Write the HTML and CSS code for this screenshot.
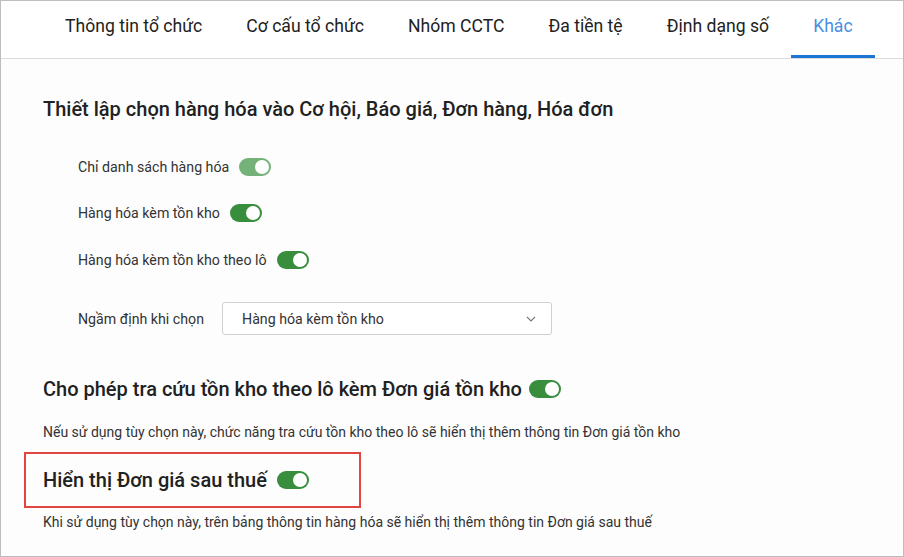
FILE: index.html
```html
<!DOCTYPE html>
<html lang="vi">
<head>
    <meta charset="UTF-8">
    <meta name="viewport" content="width=device-width, initial-scale=1.0">
    <title>Thiết lập khác</title>
    <link rel="stylesheet" href="styles.css">
</head>
<body>
    <div class="frame">
        <!-- Thanh tab -->
        <div class="tabs">
            <div class="tab">Thông tin tổ chức</div>
            <div class="tab">Cơ cấu tổ chức</div>
            <div class="tab">Nhóm CCTC</div>
            <div class="tab">Đa tiền tệ</div>
            <div class="tab">Định dạng số</div>
            <div class="tab active">Khác</div>
        </div>

        <div class="content">
            <h2 class="section-title first">Thiết lập chọn hàng hóa vào Cơ hội, Báo giá, Đơn hàng, Hóa đơn</h2>

            <div class="options">
                <div class="option">
                    <span>Chỉ danh sách hàng hóa</span>
                    <span class="switch disabled"><span class="knob"></span></span>
                </div>
                <div class="option">
                    <span>Hàng hóa kèm tồn kho</span>
                    <span class="switch"><span class="knob"></span></span>
                </div>
                <div class="option">
                    <span>Hàng hóa kèm tồn kho theo lô</span>
                    <span class="switch"><span class="knob"></span></span>
                </div>
                <div class="option default-row">
                    <span class="default-label">Ngầm định khi chọn</span>
                    <div class="select">
                        <span>Hàng hóa kèm tồn kho</span>
                        <svg class="chevron" width="10" height="6" viewBox="0 0 10 6">
                            <path d="M1 1 L5 5 L9 1" fill="none" stroke="#777" stroke-width="1.1"/>
                        </svg>
                    </div>
                </div>
            </div>

            <h2 class="section-title lookup">
                Cho phép tra cứu tồn kho theo lô kèm Đơn giá tồn kho
                <span class="switch"><span class="knob"></span></span>
            </h2>
            <p class="note">Nếu sử dụng tùy chọn này, chức năng tra cứu tồn kho theo lô sẽ hiển thị thêm thông tin Đơn giá tồn kho</p>

            <div class="highlight">
                <h2 class="section-title">
                    Hiển thị Đơn giá sau thuế
                    <span class="switch"><span class="knob"></span></span>
                </h2>
            </div>
            <p class="note last">Khi sử dụng tùy chọn này, trên bảng thông tin hàng hóa sẽ hiển thị thêm thông tin Đơn giá sau thuế</p>
        </div>
    </div>
</body>
</html>
```

FILE: styles.css
```css
* {
    box-sizing: border-box;
}
body {
    margin: 0;
    font-family: Roboto, 'Liberation Sans', sans-serif;
    color: #212121;
    background: #fff;
}
.frame {
    width: 904px;
    height: 557px;
    border: 1px solid #bdbdbd;
    background: #fdfdfd;
    overflow: hidden;
}
.tabs {
    display: flex;
    padding-left: 42px;
    background: #fff;
    border-bottom: 1px solid #dcdcdc;
}
.tab {
    padding: 13px 22px 20px;
    font-size: 17.6px;
    line-height: 24px;
    color: #212121;
    white-space: nowrap;
}
.tab.active {
    color: #4a8fe0;
    padding-bottom: 17px;
    border-bottom: 3px solid #1e74d2;
}
.content {
    padding: 0 42px;
}
.section-title {
    display: flex;
    align-items: center;
    gap: 10px;
    margin: 0;
    font-size: 20px;
    line-height: 24px;
    font-weight: 500;
    color: #212121;
}
.section-title.first {
    margin-top: 38px;
}
.options {
    padding-left: 35px;
    margin-top: 32px;
}
.option {
    display: flex;
    align-items: center;
    gap: 10px;
    height: 28px;
    font-size: 14.2px;
    color: #333;
    margin-bottom: 18px;
}
.option:nth-child(2) {
    margin-bottom: 19px;
}
.default-row {
    height: 33px;
    margin-top: 28px;
    margin-bottom: 0;
    gap: 18px;
}
.select {
    display: flex;
    align-items: center;
    justify-content: space-between;
    width: 330px;
    height: 33px;
    padding: 0 15px 0 19px;
    border: 1px solid #d0d0d0;
    border-radius: 3px;
    background: #fff;
    color: #333;
}
.chevron {
    display: block;
}
.switch {
    position: relative;
    display: inline-block;
    width: 32px;
    height: 18px;
    border-radius: 9px;
    background: #388e3c;
    flex: none;
}
.switch.disabled {
    background: #75b27a;
}
.knob {
    position: absolute;
    top: 2px;
    right: 2px;
    width: 14px;
    height: 14px;
    border-radius: 50%;
    background: #fff;
}
.lookup {
    margin-top: 42px;
}
.lookup .switch {
    margin-left: -3px;
}
.note {
    margin: 22px 0 0;
    font-size: 14px;
    line-height: 18px;
    color: #333;
}
.highlight {
    display: flex;
    align-items: center;
    width: 337px;
    height: 56px;
    margin: 11px 0 0 -19px;
    padding-left: 17px;
    border: 2px solid #e2453f;
}
.note.last {
    margin-top: 5px;
}
```
